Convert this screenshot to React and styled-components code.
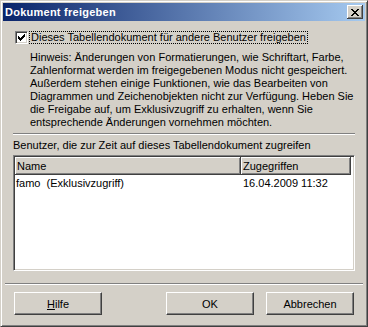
import React from 'react';
import styled, { createGlobalStyle } from 'styled-components';

const Global = createGlobalStyle`
  html, body { margin: 0; padding: 0; background: #d4d0c8; }
  body { font-family: "Liberation Sans", Arial, sans-serif; font-size: 11px; }
`;

const Window = styled.div`
  box-sizing: border-box;
  width: 368px;
  height: 327px;
  background: #d4d0c8;
  border: 1px solid;
  border-color: #d4d0c8 #404040 #404040 #d4d0c8;
  box-shadow: inset 1px 1px #fff, inset -1px -1px #808080;
  padding: 2px;
  display: flex;
  flex-direction: column;
  color: #000;
  font-family: "Liberation Sans", Arial, sans-serif;
  font-size: 11px;
`;

const TitleBar = styled.div`
  height: 18px;
  flex: none;
  display: flex;
  align-items: center;
  justify-content: space-between;
  padding: 0 2px;
  background: linear-gradient(to right, #0a246a, #a6caf0);
`;

const Title = styled.span`
  color: #fff;
  font-weight: bold;
  font-size: 11px;
  letter-spacing: 0.25px;
  line-height: 18px;
`;

const CloseButton = styled.div`
  width: 16px;
  height: 14px;
  box-sizing: border-box;
  background: #d4d0c8;
  box-shadow: inset -1px -1px #404040, inset 1px 1px #fff, inset -2px -2px #808080;
  display: flex;
  align-items: center;
  justify-content: center;
`;

const CheckRow = styled.div`
  display: flex;
  align-items: flex-start;
  margin: 10px 0 0 12px;
  height: 13px;
`;

const CheckBox = styled.div`
  box-sizing: border-box;
  width: 13px;
  height: 13px;
  background: #fff;
  border: 1px solid;
  border-color: #808080 #fff #fff #808080;
  box-shadow: inset 1px 1px #404040, inset -1px -1px #d4d0c8;
  display: flex;
  align-items: center;
  justify-content: center;
`;

const CheckLabel = styled.span`
  margin-left: 1px;
  padding: 0 1px;
  border: 1px dotted #000;
  line-height: 11px;
  height: 11px;
  white-space: nowrap;
`;

const Hint = styled.div`
  margin: 7px 0 0 27px;
  line-height: 13px;
  white-space: nowrap;
`;

const Separator = styled.div`
  height: 0;
  border-top: 1px solid #808080;
  border-bottom: 1px solid #fff;
  margin: ${p => p.$top}px ${p => p.$side}px 0;
`;

const Caption = styled.div`
  margin: 4px 10px 0;
  line-height: 13px;
  white-space: nowrap;
`;

const ListBox = styled.div`
  box-sizing: border-box;
  margin: 3px 10px 0;
  height: 116px;
  background: #fff;
  border: 1px solid;
  border-color: #808080 #fff #fff #808080;
  box-shadow: inset 1px 1px #404040, inset -1px -1px #d4d0c8;
  padding: 1px;
  display: flex;
  flex-direction: column;
`;

const Header = styled.div`
  display: flex;
  height: 18px;
  flex: none;
`;

const HeaderCell = styled.div`
  box-sizing: border-box;
  width: ${p => p.$w}px;
  height: 18px;
  padding-left: 2px;
  line-height: 18px;
  background: #d4d0c8;
  box-shadow: inset -1px -1px #404040, inset 1px 1px #fff, inset -2px -2px #808080;
  white-space: nowrap;
`;

const Row = styled.div`
  display: flex;
  height: 16px;
  line-height: 16px;
`;

const Cell = styled.div`
  box-sizing: border-box;
  width: ${p => p.$w}px;
  padding-left: ${p => p.$pl}px;
  white-space: pre;
`;

const ButtonRow = styled.div`
  display: flex;
  margin: 7px 11px 0;
  gap: 12px;
`;

const Button = styled.div`
  box-sizing: border-box;
  width: 88px;
  height: 23px;
  background: #d4d0c8;
  border: 1px solid;
  border-color: #fff #404040 #404040 #fff;
  box-shadow: inset -1px -1px #808080;
  display: flex;
  align-items: center;
  justify-content: center;
  margin-left: ${p => (p.$push ? 'auto' : '0')};
`;

const Mnemonic = styled.span`
  text-decoration: underline;
`;

const columns = [
  { name: 'Name', w: 226 },
  { name: 'Zugegriffen', w: 110 },
];

const users = [{ name: 'famo  (Exklusivzugriff)', date: '16.04.2009 11:32' }];

const hintLines = [
  'Hinweis: Änderungen von Formatierungen, wie Schriftart, Farbe,',
  'Zahlenformat werden im freigegebenen Modus nicht gespeichert.',
  'Außerdem stehen einige Funktionen, wie das Bearbeiten von',
  'Diagrammen und Zeichenobjekten nicht zur Verfügung. Heben Sie',
  'die Freigabe auf, um Exklusivzugriff zu erhalten, wenn Sie',
  'entsprechende Änderungen vornehmen möchten.',
];

export default function App() {
  return (
    <>
      <Global />
      <Window>
        <TitleBar>
          <Title>Dokument freigeben</Title>
          <CloseButton>
            <svg width="8" height="7" viewBox="0 0 8 7" shapeRendering="crispEdges">
              <path d="M0 0h2v1H0zM6 0h2v1H6zM1 1h2v1H1zM5 1h2v1H5zM2 2h4v1H2zM3 3h2v1H3zM2 4h4v1H2zM1 5h2v1H1zM5 5h2v1H5zM0 6h2v1H0zM6 6h2v1H6z" fill="#000" />
            </svg>
          </CloseButton>
        </TitleBar>

        <CheckRow>
          <CheckBox>
            <svg width="7" height="7" viewBox="0 0 7 7" shapeRendering="crispEdges">
              <path d="M6 0h1v3H6zM5 1h1v3H5zM4 2h1v3H4zM3 3h1v3H3zM2 4h1v3H2zM1 3h1v3H1zM0 2h1v3H0z" fill="#000" />
            </svg>
          </CheckBox>
          <CheckLabel>Dieses Tabellendokument für andere Benutzer freigeben</CheckLabel>
        </CheckRow>

        <Hint>
          {hintLines.map((l, i) => (
            <div key={i}>{l}</div>
          ))}
        </Hint>

        <Separator $top={4} $side={10} />

        <Caption>Benutzer, die zur Zeit auf dieses Tabellendokument zugreifen</Caption>

        <ListBox>
          <Header>
            {columns.map(c => (
              <HeaderCell key={c.name} $w={c.w}>{c.name}</HeaderCell>
            ))}
          </Header>
          {users.map(u => (
            <Row key={u.name}>
              <Cell $w={226} $pl={1}>{u.name}</Cell>
              <Cell $w={110} $pl={2}>{u.date}</Cell>
            </Row>
          ))}
        </ListBox>

        <Separator $top={12} $side={2} />

        <ButtonRow>
          <Button><span><Mnemonic>H</Mnemonic>ilfe</span></Button>
          <Button $push>OK</Button>
          <Button>Abbrechen</Button>
        </ButtonRow>
      </Window>
    </>
  );
}
